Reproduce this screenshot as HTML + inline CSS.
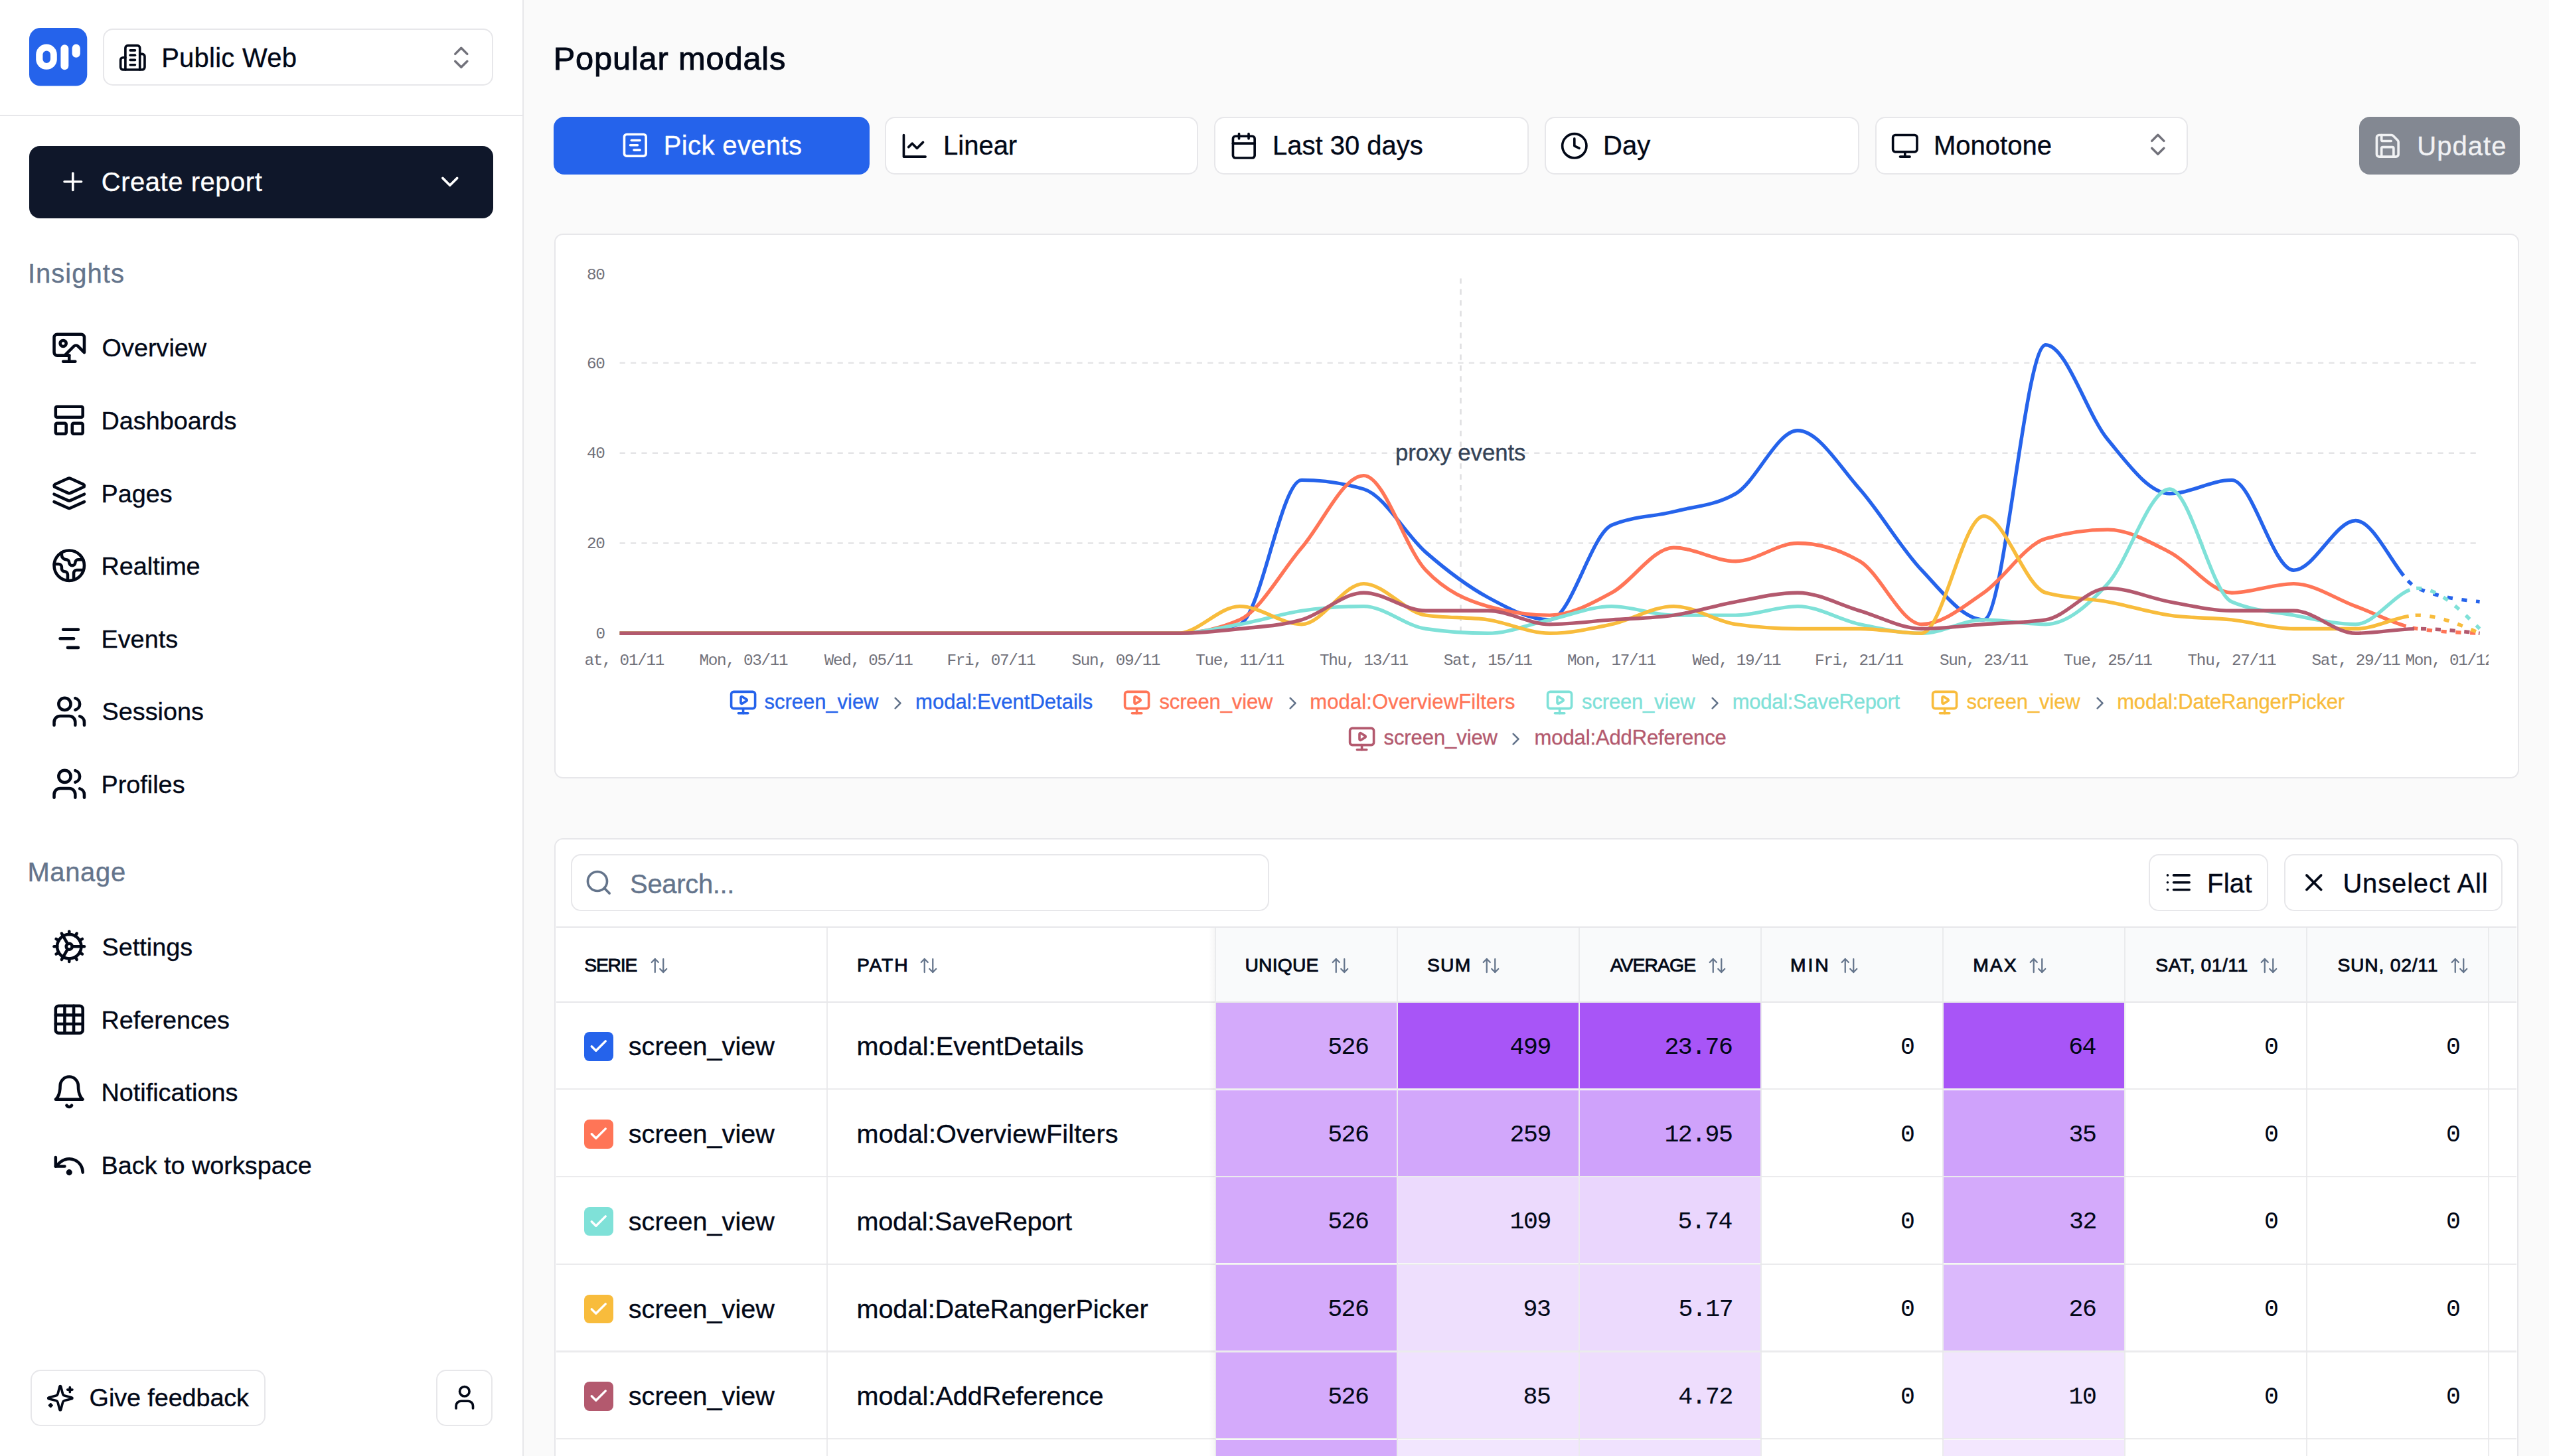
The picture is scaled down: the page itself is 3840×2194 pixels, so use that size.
<!DOCTYPE html>
<html><head><meta charset="utf-8"><style>
html,body{margin:0;padding:0}
body{width:3840px;height:2194px;overflow:hidden;position:relative;background:#fafafa;font-family:"Liberation Sans",sans-serif}
.b{position:absolute;box-sizing:border-box}
.t{position:absolute;white-space:pre;line-height:1;-webkit-text-stroke:0.35px currentColor}
svg{overflow:visible}
</style></head><body>
<div class="b" style="left:0.0px;top:0.0px;width:787.0px;height:2194.0px;background:#fff;"></div><div class="b" style="left:786.5px;top:0.0px;width:2.5px;height:2194.0px;background:#e7e7ea;"></div><div class="b" style="left:0.0px;top:172.8px;width:787.0px;height:2.5px;background:#e7e7ea;"></div><svg style="position:absolute;left:44.3px;top:42.4px" width="87.3" height="87.6" viewBox="0 0 87.3 87.6"><rect x="0" y="0" width="87.3" height="87.6" rx="17" fill="#2563eb"/><rect x="10.2" y="24.6" width="31.6" height="38.2" rx="15.8" ry="15.5" fill="#fff"/><rect x="20.4" y="34.5" width="11.6" height="18.4" rx="5.8" fill="#2563eb"/><rect x="47.4" y="25.3" width="11.9" height="37.9" rx="5.95" fill="#fff"/><rect x="64.6" y="24.6" width="12.2" height="20.1" rx="6.1" fill="#fff"/></svg><div class="b" style="left:155.0px;top:43.0px;width:587.5px;height:86.2px;background:#fff;border:2.6px solid #e7e7ea;border-radius:15px;"></div><svg style="position:absolute;left:178.2px;top:64.8px" width="43.6" height="43.6" viewBox="0 0 24 24" fill="none" stroke="#020817" stroke-width="2" stroke-linecap="round" stroke-linejoin="round"><path d="M6 22V4a2 2 0 0 1 2-2h8a2 2 0 0 1 2 2v18Z"/><path d="M6 12H4a2 2 0 0 0-2 2v6a2 2 0 0 0 2 2h2"/><path d="M18 9h2a2 2 0 0 1 2 2v9a2 2 0 0 1-2 2h-2"/><path d="M10 6h4"/><path d="M10 10h4"/><path d="M10 14h4"/><path d="M10 18h4"/></svg><div class="t" style="left:243.2px;top:66.6px;font-size:40.00px;color:#020817;letter-spacing:0.24px;">Public Web</div><svg style="position:absolute;left:673.0px;top:64.5px" width="43.6" height="43.6" viewBox="0 0 24 24" fill="none" stroke="#71717a" stroke-width="1.9" stroke-linecap="round" stroke-linejoin="round"><path d="m7 15 5 5 5-5"/><path d="m7 9 5-5 5 5"/></svg><div class="b" style="left:44.0px;top:219.5px;width:699.0px;height:109.5px;background:#0f172a;border-radius:16px;"></div><svg style="position:absolute;left:87.5px;top:252.4px" width="43.6" height="43.6" viewBox="0 0 24 24" fill="none" stroke="#fff" stroke-width="2" stroke-linecap="round" stroke-linejoin="round"><path d="M5 12h14"/><path d="M12 5v14"/></svg><div class="t" style="left:152.8px;top:254.3px;font-size:40.00px;color:#fff;letter-spacing:0.53px;">Create report</div><svg style="position:absolute;left:655.9px;top:251.8px" width="43.6" height="43.6" viewBox="0 0 24 24" fill="none" stroke="#fff" stroke-width="2" stroke-linecap="round" stroke-linejoin="round"><path d="m6 9 6 6 6-6"/></svg><div class="t" style="left:41.9px;top:392.4px;font-size:40.00px;color:#64748b;letter-spacing:1.03px;">Insights</div><svg style="position:absolute;left:77.0px;top:496.5px" width="54.5" height="54.5" viewBox="0 0 24 24" fill="none" stroke="#020817" stroke-width="2" stroke-linecap="round" stroke-linejoin="round"><circle cx="8" cy="9" r="2"/><path d="m9 17 6.1-6.1a2 2 0 0 1 2.81.01L22 15V5a2 2 0 0 0-2-2H4a2 2 0 0 0-2 2v10a2 2 0 0 0 2 2h8"/><path d="M8 21h8"/><path d="M12 17v4"/></svg><div class="t" style="left:153.6px;top:506.3px;font-size:37.80px;color:#020817;">Overview</div><svg style="position:absolute;left:77.0px;top:606.1px" width="54.5" height="54.5" viewBox="0 0 24 24" fill="none" stroke="#020817" stroke-width="2" stroke-linecap="round" stroke-linejoin="round"><rect width="18" height="7" x="3" y="3" rx="1"/><rect width="7" height="7" x="3" y="14" rx="1"/><rect width="7" height="7" x="14" y="14" rx="1"/></svg><div class="t" style="left:152.5px;top:615.9px;font-size:37.80px;color:#020817;">Dashboards</div><svg style="position:absolute;left:77.0px;top:715.7px" width="54.5" height="54.5" viewBox="0 0 24 24" fill="none" stroke="#020817" stroke-width="2" stroke-linecap="round" stroke-linejoin="round"><path d="m12.83 2.18a2 2 0 0 0-1.66 0L2.6 6.08a1 1 0 0 0 0 1.83l8.58 3.91a2 2 0 0 0 1.66 0l8.58-3.9a1 1 0 0 0 0-1.83Z"/><path d="m22 17.65-9.17 4.16a2 2 0 0 1-1.66 0L2 17.65"/><path d="m22 12.65-9.17 4.16a2 2 0 0 1-1.66 0L2 12.65"/></svg><div class="t" style="left:152.5px;top:725.5px;font-size:37.80px;color:#020817;">Pages</div><svg style="position:absolute;left:77.0px;top:825.3px" width="54.5" height="54.5" viewBox="0 0 24 24" fill="none" stroke="#020817" stroke-width="2" stroke-linecap="round" stroke-linejoin="round"><path d="M21.54 15H17a2 2 0 0 0-2 2v4.54"/><path d="M7 3.34V5a3 3 0 0 0 3 3a2 2 0 0 1 2 2c0 1.1.9 2 2 2a2 2 0 0 0 2-2c0-1.1.9-2 2-2h3.17"/><path d="M11 21.95V18a2 2 0 0 0-2-2a2 2 0 0 1-2-2v-1a2 2 0 0 0-2-2H2.05"/><circle cx="12" cy="12" r="10"/></svg><div class="t" style="left:152.5px;top:835.1px;font-size:37.80px;color:#020817;">Realtime</div><svg style="position:absolute;left:77.0px;top:934.9px" width="54.5" height="54.5" viewBox="0 0 24 24" fill="none" stroke="#020817" stroke-width="2" stroke-linecap="round" stroke-linejoin="round"><path d="M8 6h10"/><path d="M6 12h9"/><path d="M11 18h7"/></svg><div class="t" style="left:152.5px;top:944.7px;font-size:37.80px;color:#020817;">Events</div><svg style="position:absolute;left:77.0px;top:1044.5px" width="54.5" height="54.5" viewBox="0 0 24 24" fill="none" stroke="#020817" stroke-width="2" stroke-linecap="round" stroke-linejoin="round"><path d="M16 21v-2a4 4 0 0 0-4-4H6a4 4 0 0 0-4 4v2"/><circle cx="9" cy="7" r="4"/><path d="M22 21v-2a4 4 0 0 0-3-3.87"/><path d="M16 3.13a4 4 0 0 1 0 7.75"/></svg><div class="t" style="left:153.6px;top:1054.3px;font-size:37.80px;color:#020817;">Sessions</div><svg style="position:absolute;left:77.0px;top:1154.1px" width="54.5" height="54.5" viewBox="0 0 24 24" fill="none" stroke="#020817" stroke-width="2" stroke-linecap="round" stroke-linejoin="round"><path d="M16 21v-2a4 4 0 0 0-4-4H6a4 4 0 0 0-4 4v2"/><circle cx="9" cy="7" r="4"/><path d="M22 21v-2a4 4 0 0 0-3-3.87"/><path d="M16 3.13a4 4 0 0 1 0 7.75"/></svg><div class="t" style="left:152.5px;top:1163.9px;font-size:37.80px;color:#020817;">Profiles</div><div class="t" style="left:41.4px;top:1294.1px;font-size:40.00px;color:#64748b;letter-spacing:0.64px;">Manage</div><svg style="position:absolute;left:77.0px;top:1399.2px" width="54.5" height="54.5" viewBox="0 0 24 24" fill="none" stroke="#020817" stroke-width="2" stroke-linecap="round" stroke-linejoin="round"><path d="M12 20a8 8 0 1 0 0-16 8 8 0 0 0 0 16Z"/><path d="M12 14a2 2 0 1 0 0-4 2 2 0 0 0 0 4Z"/><path d="M12 2v2"/><path d="M12 22v-2"/><path d="m17 20.66-1-1.73"/><path d="M11 10.27 7 3.34"/><path d="m20.66 17-1.73-1"/><path d="m3.34 7 1.73 1"/><path d="M14 12h8"/><path d="M2 12h2"/><path d="m20.66 7-1.73 1"/><path d="m3.34 17 1.73-1"/><path d="m17 3.34-1 1.73"/><path d="m11 13.73-4 6.93"/></svg><div class="t" style="left:153.6px;top:1409.0px;font-size:37.80px;color:#020817;">Settings</div><svg style="position:absolute;left:77.0px;top:1508.8px" width="54.5" height="54.5" viewBox="0 0 24 24" fill="none" stroke="#020817" stroke-width="2" stroke-linecap="round" stroke-linejoin="round"><rect width="18" height="18" x="3" y="3" rx="2"/><path d="M3 9h18"/><path d="M3 15h18"/><path d="M9 3v18"/><path d="M15 3v18"/></svg><div class="t" style="left:152.5px;top:1518.6px;font-size:37.80px;color:#020817;">References</div><svg style="position:absolute;left:77.0px;top:1618.4px" width="54.5" height="54.5" viewBox="0 0 24 24" fill="none" stroke="#020817" stroke-width="2" stroke-linecap="round" stroke-linejoin="round"><path d="M6 8a6 6 0 0 1 12 0c0 7 3 9 3 9H3s3-2 3-9"/><path d="M10.3 21a1.94 1.94 0 0 0 3.4 0"/></svg><div class="t" style="left:152.5px;top:1628.2px;font-size:37.80px;color:#020817;">Notifications</div><svg style="position:absolute;left:77.0px;top:1728.0px" width="54.5" height="54.5" viewBox="0 0 24 24" fill="none" stroke="#020817" stroke-width="2" stroke-linecap="round" stroke-linejoin="round"><path d="M21 17a9 9 0 0 0-15-6.7L3 13"/><path d="M3 7v6h6"/><circle cx="12" cy="17" r="1"/></svg><div class="t" style="left:152.5px;top:1737.8px;font-size:37.80px;color:#020817;">Back to workspace</div><div class="b" style="left:45.5px;top:2064.0px;width:354.5px;height:85.0px;background:#fff;border:2.6px solid #e7e7ea;border-radius:15px;"></div><svg style="position:absolute;left:68.5px;top:2084.8px" width="43.6" height="43.6" viewBox="0 0 24 24" fill="none" stroke="#020817" stroke-width="2" stroke-linecap="round" stroke-linejoin="round"><path d="M9.937 15.5A2 2 0 0 0 8.5 14.063l-6.135-1.582a.5.5 0 0 1 0-.962L8.5 9.936A2 2 0 0 0 9.937 8.5l1.582-6.135a.5.5 0 0 1 .963 0L14.063 8.5A2 2 0 0 0 15.5 9.937l6.135 1.581a.5.5 0 0 1 0 .964L15.5 14.063a2 2 0 0 0-1.437 1.437l-1.582 6.135a.5.5 0 0 1-.963 0z"/><path d="M20 3v4"/><path d="M22 5h-4"/><path d="M4 17v2"/><path d="M5 18H3"/></svg><div class="t" style="left:134.6px;top:2088.0px;font-size:37.80px;color:#020817;letter-spacing:-0.10px;">Give feedback</div><div class="b" style="left:657.0px;top:2064.0px;width:84.5px;height:85.0px;background:#fff;border:2.6px solid #e7e7ea;border-radius:15px;"></div><svg style="position:absolute;left:677.6px;top:2084.4px" width="43.6" height="43.6" viewBox="0 0 24 24" fill="none" stroke="#020817" stroke-width="2" stroke-linecap="round" stroke-linejoin="round"><path d="M19 21v-2a4 4 0 0 0-4-4H9a4 4 0 0 0-4 4v2"/><circle cx="12" cy="7" r="4"/></svg><div class="t" style="left:833.7px;top:64.0px;font-size:48.80px;color:#020817;letter-spacing:0.82px;-webkit-text-stroke:0.9px currentColor">Popular modals</div><div class="b" style="left:834.0px;top:175.5px;width:476.0px;height:87.3px;background:#2563eb;border-radius:16px;"></div><svg style="position:absolute;left:935.3px;top:197.4px" width="43.6" height="43.6" viewBox="0 0 24 24" fill="none" stroke="#fff" stroke-width="2" stroke-linecap="round" stroke-linejoin="round"><rect width="18" height="18" x="3" y="3" rx="2"/><path d="M9 8h7"/><path d="M8 12h6"/><path d="M11 16h5"/></svg><div class="t" style="left:999.8px;top:199.4px;font-size:40.00px;color:#fff;letter-spacing:0.37px;">Pick events</div><div class="b" style="left:1333.0px;top:175.5px;width:472.0px;height:87.3px;background:#fff;border:2.6px solid #e7e7ea;border-radius:15px;"></div><svg style="position:absolute;left:1356.4px;top:197.7px" width="43.6" height="43.6" viewBox="0 0 24 24" fill="none" stroke="#020817" stroke-width="2" stroke-linecap="round" stroke-linejoin="round"><path d="M3 3v18h18"/><path d="m19 9-5 5-4-4-3 3"/></svg><div class="t" style="left:1421.0px;top:199.4px;font-size:40.00px;color:#020817;">Linear</div><div class="b" style="left:1829.0px;top:175.5px;width:474.0px;height:87.3px;background:#fff;border:2.6px solid #e7e7ea;border-radius:15px;"></div><svg style="position:absolute;left:1852.4px;top:197.7px" width="43.6" height="43.6" viewBox="0 0 24 24" fill="none" stroke="#020817" stroke-width="2" stroke-linecap="round" stroke-linejoin="round"><path d="M8 2v4"/><path d="M16 2v4"/><rect width="18" height="18" x="3" y="4" rx="2"/><path d="M3 10h18"/></svg><div class="t" style="left:1917.0px;top:199.4px;font-size:40.00px;color:#020817;">Last 30 days</div><div class="b" style="left:2327.0px;top:175.5px;width:473.5px;height:87.3px;background:#fff;border:2.6px solid #e7e7ea;border-radius:15px;"></div><svg style="position:absolute;left:2350.4px;top:197.7px" width="43.6" height="43.6" viewBox="0 0 24 24" fill="none" stroke="#020817" stroke-width="2" stroke-linecap="round" stroke-linejoin="round"><circle cx="12" cy="12" r="10"/><polyline points="12 6 12 12 16 14"/></svg><div class="t" style="left:2415.0px;top:199.4px;font-size:40.00px;color:#020817;">Day</div><div class="b" style="left:2825.0px;top:175.5px;width:471.0px;height:87.3px;background:#fff;border:2.6px solid #e7e7ea;border-radius:15px;"></div><svg style="position:absolute;left:2848.4px;top:197.7px" width="43.6" height="43.6" viewBox="0 0 24 24" fill="none" stroke="#020817" stroke-width="2" stroke-linecap="round" stroke-linejoin="round"><rect width="20" height="14" x="2" y="3" rx="2"/><line x1="8" x2="16" y1="21" y2="21"/><line x1="12" x2="12" y1="17" y2="21"/></svg><div class="t" style="left:2913.0px;top:199.4px;font-size:40.00px;color:#020817;">Monotone</div><svg style="position:absolute;left:3229.3px;top:195.9px" width="43.6" height="43.6" viewBox="0 0 24 24" fill="none" stroke="#71717a" stroke-width="1.9" stroke-linecap="round" stroke-linejoin="round"><path d="m7 15 5 5 5-5"/><path d="m7 9 5-5 5 5"/></svg><div class="b" style="left:3553.5px;top:175.5px;width:242.0px;height:87.3px;background:#838892;border-radius:16px;"></div><svg style="position:absolute;left:3575.4px;top:197.8px" width="43.6" height="43.6" viewBox="0 0 24 24" fill="none" stroke="#f1f2f4" stroke-width="2" stroke-linecap="round" stroke-linejoin="round"><path d="M15.2 3a2 2 0 0 1 1.4.6l3.8 3.8a2 2 0 0 1 .6 1.4V19a2 2 0 0 1-2 2H5a2 2 0 0 1-2-2V5a2 2 0 0 1 2-2z"/><path d="M17 21v-7a1 1 0 0 0-1-1H8a1 1 0 0 0-1 1v7"/><path d="M7 3v4a1 1 0 0 0 1 1h7"/></svg><div class="t" style="left:3641.2px;top:199.7px;font-size:40.00px;color:#f1f2f4;letter-spacing:1.06px;">Update</div><div class="b" style="left:835.0px;top:352.0px;width:2960.0px;height:821.0px;background:#fff;border:2.6px solid #e7e7ea;border-radius:13px;"></div><svg style="position:absolute;left:0;top:0" width="3840" height="1200" viewBox="0 0 3840 1200"><defs><clipPath id="pc"><rect x="880" y="330" width="2869" height="800"/></clipPath></defs><line x1="933.6" x2="3735.6" y1="818.5" y2="818.5" stroke="#e4e4e6" stroke-width="2.4" stroke-dasharray="8.2 8.2"/><line x1="933.6" x2="3735.6" y1="682.7" y2="682.7" stroke="#e4e4e6" stroke-width="2.4" stroke-dasharray="8.2 8.2"/><line x1="933.6" x2="3735.6" y1="546.9" y2="546.9" stroke="#e4e4e6" stroke-width="2.4" stroke-dasharray="8.2 8.2"/><line x1="2200.5" x2="2200.5" y1="419.4" y2="954" stroke="#e0e0e2" stroke-width="2.7" stroke-dasharray="8.2 8.2"/><path d="M933.6,954.3 C964.7,954.3 995.9,954.3 1027.0,954.3 C1058.1,954.3 1089.3,954.3 1120.4,954.3 C1151.5,954.3 1182.7,954.3 1213.8,954.3 C1244.9,954.3 1276.1,954.3 1307.2,954.3 C1338.3,954.3 1369.5,954.3 1400.6,954.3 C1431.7,954.3 1462.9,954.3 1494.0,954.3 C1525.1,954.3 1556.3,954.3 1587.4,954.3 C1618.5,954.3 1649.7,954.3 1680.8,954.3 C1711.9,954.3 1743.1,954.3 1774.2,954.3 C1805.3,954.3 1836.5,949.8 1867.6,940.7 C1898.7,931.7 1929.9,723.4 1961.0,723.4 C1992.1,723.4 2023.3,728.0 2054.4,737.0 C2085.5,746.1 2116.7,804.9 2147.8,832.1 C2178.9,859.2 2210.1,883.0 2241.2,900.0 C2272.3,917.0 2303.5,933.9 2334.6,933.9 C2365.7,933.9 2396.9,804.9 2428.0,791.3 C2459.1,777.8 2490.3,778.9 2521.4,771.0 C2552.5,763.0 2583.7,761.9 2614.8,743.8 C2645.9,725.7 2677.1,648.8 2708.2,648.8 C2739.3,648.8 2770.5,701.9 2801.6,737.0 C2832.7,772.1 2863.9,826.4 2895.0,859.2 C2926.1,892.1 2957.3,933.9 2988.4,933.9 C3019.5,933.9 3050.7,519.7 3081.8,519.7 C3112.9,519.7 3144.1,625.0 3175.2,662.3 C3206.3,699.7 3237.5,743.8 3268.6,743.8 C3299.7,743.8 3330.9,723.4 3362.0,723.4 C3393.1,723.4 3424.3,859.2 3455.4,859.2 C3486.5,859.2 3517.7,784.5 3548.8,784.5 C3572.9,784.5 3596.9,837.3 3621.0,867.5" fill="none" stroke="#2563eb" stroke-width="5.4" stroke-linejoin="round"/><path d="M3621.0,867.5 C3628.1,876.4 3635.1,883.3 3642.2,886.4 C3673.3,900.0 3704.5,903.4 3735.6,906.8" fill="none" stroke="#2563eb" stroke-width="5.4" stroke-dasharray="8.2 13.6" stroke-dashoffset="11.8"/><path d="M933.6,954.3 C964.7,954.3 995.9,954.3 1027.0,954.3 C1058.1,954.3 1089.3,954.3 1120.4,954.3 C1151.5,954.3 1182.7,954.3 1213.8,954.3 C1244.9,954.3 1276.1,954.3 1307.2,954.3 C1338.3,954.3 1369.5,954.3 1400.6,954.3 C1431.7,954.3 1462.9,954.3 1494.0,954.3 C1525.1,954.3 1556.3,954.3 1587.4,954.3 C1618.5,954.3 1649.7,954.3 1680.8,954.3 C1711.9,954.3 1743.1,954.3 1774.2,954.3 C1805.3,954.3 1836.5,947.5 1867.6,933.9 C1898.7,920.3 1929.9,861.5 1961.0,825.3 C1992.1,789.1 2023.3,716.6 2054.4,716.6 C2085.5,716.6 2116.7,826.4 2147.8,859.2 C2178.9,892.1 2210.1,904.5 2241.2,913.6 C2272.3,922.6 2303.5,927.1 2334.6,927.1 C2365.7,927.1 2396.9,910.2 2428.0,893.2 C2459.1,876.2 2490.3,825.3 2521.4,825.3 C2552.5,825.3 2583.7,845.7 2614.8,845.7 C2645.9,845.7 2677.1,818.5 2708.2,818.5 C2739.3,818.5 2770.5,827.6 2801.6,845.7 C2832.7,863.8 2863.9,940.7 2895.0,940.7 C2926.1,940.7 2957.3,914.7 2988.4,893.2 C3019.5,871.7 3050.7,820.8 3081.8,811.7 C3112.9,802.7 3144.1,798.1 3175.2,798.1 C3206.3,798.1 3237.5,816.2 3268.6,832.1 C3299.7,847.9 3330.9,893.2 3362.0,893.2 C3393.1,893.2 3424.3,879.6 3455.4,879.6 C3486.5,879.6 3517.7,902.2 3548.8,913.6 C3574.1,922.7 3599.3,936.4 3624.6,943.6" fill="none" stroke="#ff7557" stroke-width="5.4" stroke-linejoin="round"/><path d="M3624.6,943.6 C3630.5,945.3 3636.3,946.7 3642.2,947.5 C3673.3,952.0 3704.5,953.2 3735.6,954.3" fill="none" stroke="#ff7557" stroke-width="5.4" stroke-dasharray="8.2 13.6" stroke-dashoffset="11.8"/><path d="M933.6,954.3 C964.7,954.3 995.9,954.3 1027.0,954.3 C1058.1,954.3 1089.3,954.3 1120.4,954.3 C1151.5,954.3 1182.7,954.3 1213.8,954.3 C1244.9,954.3 1276.1,954.3 1307.2,954.3 C1338.3,954.3 1369.5,954.3 1400.6,954.3 C1431.7,954.3 1462.9,954.3 1494.0,954.3 C1525.1,954.3 1556.3,954.3 1587.4,954.3 C1618.5,954.3 1649.7,954.3 1680.8,954.3 C1711.9,954.3 1743.1,954.3 1774.2,954.3 C1805.3,954.3 1836.5,946.4 1867.6,940.7 C1898.7,935.1 1929.9,924.9 1961.0,920.3 C1992.1,915.8 2023.3,913.6 2054.4,913.6 C2085.5,913.6 2116.7,943.0 2147.8,947.5 C2178.9,952.0 2210.1,954.3 2241.2,954.3 C2272.3,954.3 2303.5,940.7 2334.6,933.9 C2365.7,927.1 2396.9,913.6 2428.0,913.6 C2459.1,913.6 2490.3,927.1 2521.4,927.1 C2552.5,927.1 2583.7,927.1 2614.8,927.1 C2645.9,927.1 2677.1,913.6 2708.2,913.6 C2739.3,913.6 2770.5,933.9 2801.6,940.7 C2832.7,947.5 2863.9,954.3 2895.0,954.3 C2926.1,954.3 2957.3,933.9 2988.4,933.9 C3019.5,933.9 3050.7,940.7 3081.8,940.7 C3112.9,940.7 3144.1,913.6 3175.2,879.6 C3206.3,845.7 3237.5,737.0 3268.6,737.0 C3299.7,737.0 3330.9,893.2 3362.0,906.8 C3393.1,920.4 3424.3,921.5 3455.4,927.1 C3486.5,932.8 3517.7,940.7 3548.8,940.7 C3576.0,940.7 3603.2,899.3 3630.4,888.8" fill="none" stroke="#7fe1d8" stroke-width="5.4" stroke-linejoin="round"/><path d="M3630.4,888.8 C3634.3,887.3 3638.3,886.4 3642.2,886.4 C3673.3,886.4 3704.5,917.0 3735.6,947.5" fill="none" stroke="#7fe1d8" stroke-width="5.4" stroke-dasharray="8.2 13.6" stroke-dashoffset="11.8"/><path d="M933.6,954.3 C964.7,954.3 995.9,954.3 1027.0,954.3 C1058.1,954.3 1089.3,954.3 1120.4,954.3 C1151.5,954.3 1182.7,954.3 1213.8,954.3 C1244.9,954.3 1276.1,954.3 1307.2,954.3 C1338.3,954.3 1369.5,954.3 1400.6,954.3 C1431.7,954.3 1462.9,954.3 1494.0,954.3 C1525.1,954.3 1556.3,954.3 1587.4,954.3 C1618.5,954.3 1649.7,954.3 1680.8,954.3 C1711.9,954.3 1743.1,954.3 1774.2,954.3 C1805.3,954.3 1836.5,913.6 1867.6,913.6 C1898.7,913.6 1929.9,940.7 1961.0,940.7 C1992.1,940.7 2023.3,879.6 2054.4,879.6 C2085.5,879.6 2116.7,922.6 2147.8,927.1 C2178.9,931.7 2210.1,929.4 2241.2,933.9 C2272.3,938.5 2303.5,954.3 2334.6,954.3 C2365.7,954.3 2396.9,947.5 2428.0,940.7 C2459.1,933.9 2490.3,913.6 2521.4,913.6 C2552.5,913.6 2583.7,936.2 2614.8,940.7 C2645.9,945.2 2677.1,947.5 2708.2,947.5 C2739.3,947.5 2770.5,947.5 2801.6,947.5 C2832.7,947.5 2863.9,954.3 2895.0,954.3 C2926.1,954.3 2957.3,777.8 2988.4,777.8 C3019.5,777.8 3050.7,884.1 3081.8,893.2 C3112.9,902.2 3144.1,901.1 3175.2,906.8 C3206.3,912.4 3237.5,922.6 3268.6,927.1 C3299.7,931.7 3330.9,930.5 3362.0,933.9 C3393.1,937.3 3424.3,947.5 3455.4,947.5 C3486.5,947.5 3517.7,947.5 3548.8,947.5 C3575.4,947.5 3602.1,932.6 3628.7,928.3" fill="none" stroke="#f8bc3c" stroke-width="5.4" stroke-linejoin="round"/><path d="M3628.7,928.3 C3633.2,927.6 3637.7,927.1 3642.2,927.1 C3673.3,927.1 3704.5,940.7 3735.6,954.3" fill="none" stroke="#f8bc3c" stroke-width="5.4" stroke-dasharray="8.2 13.6" stroke-dashoffset="11.8"/><path d="M933.6,954.3 C964.7,954.3 995.9,954.3 1027.0,954.3 C1058.1,954.3 1089.3,954.3 1120.4,954.3 C1151.5,954.3 1182.7,954.3 1213.8,954.3 C1244.9,954.3 1276.1,954.3 1307.2,954.3 C1338.3,954.3 1369.5,954.3 1400.6,954.3 C1431.7,954.3 1462.9,954.3 1494.0,954.3 C1525.1,954.3 1556.3,954.3 1587.4,954.3 C1618.5,954.3 1649.7,954.3 1680.8,954.3 C1711.9,954.3 1743.1,954.3 1774.2,954.3 C1805.3,954.3 1836.5,950.9 1867.6,947.5 C1898.7,944.1 1929.9,943.0 1961.0,933.9 C1992.1,924.9 2023.3,893.2 2054.4,893.2 C2085.5,893.2 2116.7,920.3 2147.8,920.3 C2178.9,920.3 2210.1,920.3 2241.2,920.3 C2272.3,920.3 2303.5,940.7 2334.6,940.7 C2365.7,940.7 2396.9,936.2 2428.0,933.9 C2459.1,931.7 2490.3,931.7 2521.4,927.1 C2552.5,922.6 2583.7,912.4 2614.8,906.8 C2645.9,901.1 2677.1,893.2 2708.2,893.2 C2739.3,893.2 2770.5,911.3 2801.6,920.3 C2832.7,929.4 2863.9,947.5 2895.0,947.5 C2926.1,947.5 2957.3,943.0 2988.4,940.7 C3019.5,938.5 3050.7,938.5 3081.8,933.9 C3112.9,929.4 3144.1,886.4 3175.2,886.4 C3206.3,886.4 3237.5,901.1 3268.6,906.8 C3299.7,912.4 3330.9,920.3 3362.0,920.3 C3393.1,920.3 3424.3,920.3 3455.4,920.3 C3486.5,920.3 3517.7,954.3 3548.8,954.3 C3578.2,954.3 3607.6,948.2 3637.0,947.6" fill="none" stroke="#b3596e" stroke-width="5.4" stroke-linejoin="round"/><path d="M3637.0,947.6 C3638.7,947.5 3640.5,947.5 3642.2,947.5 C3673.3,947.5 3704.5,950.9 3735.6,954.3" fill="none" stroke="#b3596e" stroke-width="5.4" stroke-dasharray="8.2 13.6" stroke-dashoffset="11.8"/></svg><div class="t" style="left:897.4px;top:943.9px;font-size:24.30px;color:#71717a;font-family:'Liberation Mono';letter-spacing:-1.30px;-webkit-text-stroke:0">0</div><div class="t" style="left:884.1px;top:808.1px;font-size:24.30px;color:#71717a;font-family:'Liberation Mono';letter-spacing:-1.30px;-webkit-text-stroke:0">20</div><div class="t" style="left:884.1px;top:672.3px;font-size:24.30px;color:#71717a;font-family:'Liberation Mono';letter-spacing:-1.30px;-webkit-text-stroke:0">40</div><div class="t" style="left:884.1px;top:536.5px;font-size:24.30px;color:#71717a;font-family:'Liberation Mono';letter-spacing:-1.30px;-webkit-text-stroke:0">60</div><div class="t" style="left:884.1px;top:403.4px;font-size:24.30px;color:#71717a;font-family:'Liberation Mono';letter-spacing:-1.30px;-webkit-text-stroke:0">80</div><div class="b" style="left:882px;top:960px;width:2867px;height:60px;overflow:hidden"><div class="t" style="left:-14.8px;top:24.4px;font-size:24.30px;color:#71717a;font-family:'Liberation Mono';letter-spacing:-1.30px;-webkit-text-stroke:0">Sat, 01/11</div><div class="t" style="left:171.5px;top:24.4px;font-size:24.30px;color:#71717a;font-family:'Liberation Mono';letter-spacing:-1.30px;-webkit-text-stroke:0">Mon, 03/11</div><div class="t" style="left:359.8px;top:24.4px;font-size:24.30px;color:#71717a;font-family:'Liberation Mono';letter-spacing:-1.30px;-webkit-text-stroke:0">Wed, 05/11</div><div class="t" style="left:544.4px;top:24.4px;font-size:24.30px;color:#71717a;font-family:'Liberation Mono';letter-spacing:-1.30px;-webkit-text-stroke:0">Fri, 07/11</div><div class="t" style="left:732.4px;top:24.4px;font-size:24.30px;color:#71717a;font-family:'Liberation Mono';letter-spacing:-1.30px;-webkit-text-stroke:0">Sun, 09/11</div><div class="t" style="left:919.2px;top:24.4px;font-size:24.30px;color:#71717a;font-family:'Liberation Mono';letter-spacing:-1.30px;-webkit-text-stroke:0">Tue, 11/11</div><div class="t" style="left:1106.0px;top:24.4px;font-size:24.30px;color:#71717a;font-family:'Liberation Mono';letter-spacing:-1.30px;-webkit-text-stroke:0">Thu, 13/11</div><div class="t" style="left:1292.8px;top:24.4px;font-size:24.30px;color:#71717a;font-family:'Liberation Mono';letter-spacing:-1.30px;-webkit-text-stroke:0">Sat, 15/11</div><div class="t" style="left:1479.1px;top:24.4px;font-size:24.30px;color:#71717a;font-family:'Liberation Mono';letter-spacing:-1.30px;-webkit-text-stroke:0">Mon, 17/11</div><div class="t" style="left:1667.4px;top:24.4px;font-size:24.30px;color:#71717a;font-family:'Liberation Mono';letter-spacing:-1.30px;-webkit-text-stroke:0">Wed, 19/11</div><div class="t" style="left:1852.0px;top:24.4px;font-size:24.30px;color:#71717a;font-family:'Liberation Mono';letter-spacing:-1.30px;-webkit-text-stroke:0">Fri, 21/11</div><div class="t" style="left:2040.0px;top:24.4px;font-size:24.30px;color:#71717a;font-family:'Liberation Mono';letter-spacing:-1.30px;-webkit-text-stroke:0">Sun, 23/11</div><div class="t" style="left:2226.8px;top:24.4px;font-size:24.30px;color:#71717a;font-family:'Liberation Mono';letter-spacing:-1.30px;-webkit-text-stroke:0">Tue, 25/11</div><div class="t" style="left:2413.6px;top:24.4px;font-size:24.30px;color:#71717a;font-family:'Liberation Mono';letter-spacing:-1.30px;-webkit-text-stroke:0">Thu, 27/11</div><div class="t" style="left:2600.4px;top:24.4px;font-size:24.30px;color:#71717a;font-family:'Liberation Mono';letter-spacing:-1.30px;-webkit-text-stroke:0">Sat, 29/11</div><div class="t" style="left:2741.5px;top:24.4px;font-size:24.30px;color:#71717a;font-family:'Liberation Mono';letter-spacing:-1.30px;-webkit-text-stroke:0">Mon, 01/12</div></div><div class="t" style="left:2101.9px;top:664.7px;font-size:34.70px;color:#334155;letter-spacing:-0.01px;">proxy events</div><svg style="position:absolute;left:1097.5px;top:1037.0px" width="43.2" height="43.2" viewBox="0 0 24 24" fill="none" stroke="#2563eb" stroke-width="2" stroke-linecap="round" stroke-linejoin="round"><path d="M10 7.75a.75.75 0 0 1 1.142-.638l3.664 2.249a.75.75 0 0 1 0 1.278l-3.664 2.25a.75.75 0 0 1-1.142-.64z"/><path d="M12 17v4"/><path d="M8 21h8"/><rect x="2" y="3" width="20" height="14" rx="2"/></svg><div class="t" style="left:1151.6px;top:1041.5px;font-size:31.00px;color:#2563eb;letter-spacing:-0.04px;">screen_view</div><svg style="position:absolute;left:1336.8px;top:1043.5px" width="31.2" height="31.2" viewBox="0 0 24 24" fill="none" stroke="#64748b" stroke-width="2" stroke-linecap="round" stroke-linejoin="round"><path d="m9 18 6-6-6-6"/></svg><div class="t" style="left:1379.1px;top:1041.5px;font-size:31.00px;color:#2563eb;">modal:EventDetails</div><svg style="position:absolute;left:1691.2px;top:1037.0px" width="43.2" height="43.2" viewBox="0 0 24 24" fill="none" stroke="#ff7557" stroke-width="2" stroke-linecap="round" stroke-linejoin="round"><path d="M10 7.75a.75.75 0 0 1 1.142-.638l3.664 2.249a.75.75 0 0 1 0 1.278l-3.664 2.25a.75.75 0 0 1-1.142-.64z"/><path d="M12 17v4"/><path d="M8 21h8"/><rect x="2" y="3" width="20" height="14" rx="2"/></svg><div class="t" style="left:1746.4px;top:1041.5px;font-size:31.00px;color:#ff7557;letter-spacing:-0.13px;">screen_view</div><svg style="position:absolute;left:1932.1px;top:1043.5px" width="31.2" height="31.2" viewBox="0 0 24 24" fill="none" stroke="#64748b" stroke-width="2" stroke-linecap="round" stroke-linejoin="round"><path d="m9 18 6-6-6-6"/></svg><div class="t" style="left:1973.2px;top:1041.5px;font-size:31.00px;color:#ff7557;letter-spacing:0.13px;">modal:OverviewFilters</div><svg style="position:absolute;left:2328.2px;top:1037.0px" width="43.2" height="43.2" viewBox="0 0 24 24" fill="none" stroke="#7fe1d8" stroke-width="2" stroke-linecap="round" stroke-linejoin="round"><path d="M10 7.75a.75.75 0 0 1 1.142-.638l3.664 2.249a.75.75 0 0 1 0 1.278l-3.664 2.25a.75.75 0 0 1-1.142-.64z"/><path d="M12 17v4"/><path d="M8 21h8"/><rect x="2" y="3" width="20" height="14" rx="2"/></svg><div class="t" style="left:2383.1px;top:1041.5px;font-size:31.00px;color:#7fe1d8;letter-spacing:-0.18px;">screen_view</div><svg style="position:absolute;left:2567.6px;top:1043.5px" width="31.2" height="31.2" viewBox="0 0 24 24" fill="none" stroke="#64748b" stroke-width="2" stroke-linecap="round" stroke-linejoin="round"><path d="m9 18 6-6-6-6"/></svg><div class="t" style="left:2609.8px;top:1041.5px;font-size:31.00px;color:#7fe1d8;letter-spacing:-0.29px;">modal:SaveReport</div><svg style="position:absolute;left:2908.1px;top:1037.0px" width="43.2" height="43.2" viewBox="0 0 24 24" fill="none" stroke="#f8bc3c" stroke-width="2" stroke-linecap="round" stroke-linejoin="round"><path d="M10 7.75a.75.75 0 0 1 1.142-.638l3.664 2.249a.75.75 0 0 1 0 1.278l-3.664 2.25a.75.75 0 0 1-1.142-.64z"/><path d="M12 17v4"/><path d="M8 21h8"/><rect x="2" y="3" width="20" height="14" rx="2"/></svg><div class="t" style="left:2962.6px;top:1041.5px;font-size:31.00px;color:#f8bc3c;letter-spacing:-0.12px;">screen_view</div><svg style="position:absolute;left:3147.6px;top:1043.5px" width="31.2" height="31.2" viewBox="0 0 24 24" fill="none" stroke="#64748b" stroke-width="2" stroke-linecap="round" stroke-linejoin="round"><path d="m9 18 6-6-6-6"/></svg><div class="t" style="left:3189.2px;top:1041.5px;font-size:31.00px;color:#f8bc3c;letter-spacing:-0.16px;">modal:DateRangerPicker</div><svg style="position:absolute;left:2030.2px;top:1092.4px" width="43.2" height="43.2" viewBox="0 0 24 24" fill="none" stroke="#b3596e" stroke-width="2" stroke-linecap="round" stroke-linejoin="round"><path d="M10 7.75a.75.75 0 0 1 1.142-.638l3.664 2.249a.75.75 0 0 1 0 1.278l-3.664 2.25a.75.75 0 0 1-1.142-.64z"/><path d="M12 17v4"/><path d="M8 21h8"/><rect x="2" y="3" width="20" height="14" rx="2"/></svg><div class="t" style="left:2084.5px;top:1095.8px;font-size:31.00px;color:#b3596e;letter-spacing:-0.08px;">screen_view</div><svg style="position:absolute;left:2268.3px;top:1097.8px" width="31.2" height="31.2" viewBox="0 0 24 24" fill="none" stroke="#64748b" stroke-width="2" stroke-linecap="round" stroke-linejoin="round"><path d="m9 18 6-6-6-6"/></svg><div class="t" style="left:2311.6px;top:1095.8px;font-size:31.00px;color:#b3596e;letter-spacing:-0.12px;">modal:AddReference</div><div class="b" style="left:835.0px;top:1262.5px;width:2959.0px;height:997.5px;background:#fff;border:2.6px solid #e7e7ea;border-radius:13px;"></div><div class="b" style="left:859.6px;top:1286.5px;width:1052.1px;height:86.9px;background:#fff;border:2.6px solid #e7e7ea;border-radius:15px;"></div><svg style="position:absolute;left:880.2px;top:1308.2px" width="43.6" height="43.6" viewBox="0 0 24 24" fill="none" stroke="#64748b" stroke-width="2" stroke-linecap="round" stroke-linejoin="round"><circle cx="11" cy="11" r="8"/><path d="m21 21-4.3-4.3"/></svg><div class="t" style="left:949.1px;top:1311.5px;font-size:40.00px;color:#64748b;letter-spacing:-0.34px;">Search...</div><div class="b" style="left:3236.5px;top:1287.4px;width:180.0px;height:85.2px;background:#fff;border:2.6px solid #e7e7ea;border-radius:15px;"></div><svg style="position:absolute;left:3259.7px;top:1308.3px" width="43.6" height="43.6" viewBox="0 0 24 24" fill="none" stroke="#020817" stroke-width="2" stroke-linecap="round" stroke-linejoin="round"><line x1="8" x2="21" y1="6" y2="6"/><line x1="8" x2="21" y1="12" y2="12"/><line x1="8" x2="21" y1="18" y2="18"/><line x1="3" x2="3.01" y1="6" y2="6"/><line x1="3" x2="3.01" y1="12" y2="12"/><line x1="3" x2="3.01" y1="18" y2="18"/></svg><div class="t" style="left:3325.0px;top:1310.7px;font-size:40.00px;color:#020817;letter-spacing:0.27px;">Flat</div><div class="b" style="left:3440.9px;top:1287.4px;width:329.3px;height:85.2px;background:#fff;border:2.6px solid #e7e7ea;border-radius:15px;"></div><svg style="position:absolute;left:3463.9px;top:1308.3px" width="43.6" height="43.6" viewBox="0 0 24 24" fill="none" stroke="#020817" stroke-width="2" stroke-linecap="round" stroke-linejoin="round"><path d="M18 6 6 18"/><path d="m6 6 12 12"/></svg><div class="t" style="left:3529.4px;top:1310.7px;font-size:40.00px;color:#020817;letter-spacing:0.84px;">Unselect All</div><div class="b" style="left:837.6px;top:1396.0px;width:2953.8px;height:2.4px;background:#e7e7ea;"></div><div class="b" style="left:1831.0px;top:1398.4px;width:1960.4px;height:110.6px;background:#f9fafb;"></div><div class="b" style="left:837.6px;top:1508.6px;width:2953.8px;height:2.4px;background:#e7e7ea;"></div><div class="b" style="left:1832.2px;top:1510.9px;width:271.6px;height:129.1px;background:rgb(212,170,251);"></div><div class="b" style="left:2106.2px;top:1510.9px;width:271.6px;height:129.1px;background:rgb(168,85,247);"></div><div class="b" style="left:2380.2px;top:1510.9px;width:271.6px;height:129.1px;background:rgb(168,85,247);"></div><div class="b" style="left:2928.2px;top:1510.9px;width:271.6px;height:129.1px;background:rgb(168,85,247);"></div><div class="b" style="left:1832.2px;top:1642.7px;width:271.6px;height:129.1px;background:rgb(212,170,251);"></div><div class="b" style="left:2106.2px;top:1642.7px;width:271.6px;height:129.1px;background:rgb(210,167,251);"></div><div class="b" style="left:2380.2px;top:1642.7px;width:271.6px;height:129.1px;background:rgb(207,162,251);"></div><div class="b" style="left:2928.2px;top:1642.7px;width:271.6px;height:129.1px;background:rgb(207,162,251);"></div><div class="b" style="left:1832.2px;top:1774.4px;width:271.6px;height:129.1px;background:rgb(212,170,251);"></div><div class="b" style="left:2106.2px;top:1774.4px;width:271.6px;height:129.1px;background:rgb(236,218,253);"></div><div class="b" style="left:2380.2px;top:1774.4px;width:271.6px;height:129.1px;background:rgb(234,214,253);"></div><div class="b" style="left:2928.2px;top:1774.4px;width:271.6px;height:129.1px;background:rgb(212,170,251);"></div><div class="b" style="left:1832.2px;top:1906.2px;width:271.6px;height:129.1px;background:rgb(212,170,251);"></div><div class="b" style="left:2106.2px;top:1906.2px;width:271.6px;height:129.1px;background:rgb(238,223,253);"></div><div class="b" style="left:2380.2px;top:1906.2px;width:271.6px;height:129.1px;background:rgb(236,218,253);"></div><div class="b" style="left:2928.2px;top:1906.2px;width:271.6px;height:129.1px;background:rgb(219,185,252);"></div><div class="b" style="left:1832.2px;top:2037.9px;width:271.6px;height:129.2px;background:rgb(212,170,251);"></div><div class="b" style="left:2106.2px;top:2037.9px;width:271.6px;height:129.2px;background:rgb(240,226,254);"></div><div class="b" style="left:2380.2px;top:2037.9px;width:271.6px;height:129.2px;background:rgb(238,221,253);"></div><div class="b" style="left:2928.2px;top:2037.9px;width:271.6px;height:129.2px;background:rgb(241,228,254);"></div><div class="b" style="left:1832.2px;top:2169.7px;width:271.6px;height:129.2px;background:rgb(212,170,251);"></div><div class="b" style="left:2106.2px;top:2169.7px;width:271.6px;height:129.2px;background:rgb(242,230,254);"></div><div class="b" style="left:2380.2px;top:2169.7px;width:271.6px;height:129.2px;background:rgb(240,226,254);"></div><div class="b" style="left:2928.2px;top:2169.7px;width:271.6px;height:129.2px;background:rgb(243,231,254);"></div><div class="b" style="left:837.6px;top:1640.0px;width:2953.8px;height:2.4px;background:#e7e7ea;opacity:0.85"></div><div class="b" style="left:837.6px;top:1771.8px;width:2953.8px;height:2.4px;background:#e7e7ea;opacity:0.85"></div><div class="b" style="left:837.6px;top:1903.5px;width:2953.8px;height:2.4px;background:#e7e7ea;opacity:0.85"></div><div class="b" style="left:837.6px;top:2035.3px;width:2953.8px;height:2.4px;background:#e7e7ea;opacity:0.85"></div><div class="b" style="left:837.6px;top:2167.1px;width:2953.8px;height:2.4px;background:#e7e7ea;opacity:0.85"></div><div class="b" style="left:1245.3px;top:1398.4px;width:2.0px;height:795.6px;background:#e7e7ea;opacity:0.85"></div><div class="b" style="left:1830.0px;top:1398.4px;width:2.0px;height:795.6px;background:#e7e7ea;opacity:0.85"></div><div class="b" style="left:2104.0px;top:1398.4px;width:2.0px;height:795.6px;background:#e7e7ea;opacity:0.85"></div><div class="b" style="left:2378.0px;top:1398.4px;width:2.0px;height:795.6px;background:#e7e7ea;opacity:0.85"></div><div class="b" style="left:2652.0px;top:1398.4px;width:2.0px;height:795.6px;background:#e7e7ea;opacity:0.85"></div><div class="b" style="left:2926.0px;top:1398.4px;width:2.0px;height:795.6px;background:#e7e7ea;opacity:0.85"></div><div class="b" style="left:3200.0px;top:1398.4px;width:2.0px;height:795.6px;background:#e7e7ea;opacity:0.85"></div><div class="b" style="left:3474.0px;top:1398.4px;width:2.0px;height:795.6px;background:#e7e7ea;opacity:0.85"></div><div class="b" style="left:3748.0px;top:1398.4px;width:2.0px;height:795.6px;background:#e7e7ea;opacity:0.85"></div><div class="b" style="left:1821px;top:1398px;width:9px;height:800px;background:linear-gradient(90deg,rgba(0,0,0,0),rgba(0,0,0,0.035))"></div><div class="t" style="left:880.3px;top:1439.9px;font-size:28.30px;color:#020817;letter-spacing:-1.21px;-webkit-text-stroke:0.85px currentColor">SERIE</div><svg style="position:absolute;left:977.5px;top:1439.7px" width="30.0" height="30.0" viewBox="0 0 24 24" fill="none" stroke="#64748b" stroke-width="1.8" stroke-linecap="round" stroke-linejoin="round"><path d="m21 16-4 4-4-4"/><path d="M17 20V4"/><path d="m3 8 4-4 4 4"/><path d="M7 4v16"/></svg><div class="t" style="left:1291.1px;top:1439.9px;font-size:28.30px;color:#020817;letter-spacing:1.74px;-webkit-text-stroke:0.85px currentColor">PATH</div><svg style="position:absolute;left:1383.7px;top:1439.7px" width="30.0" height="30.0" viewBox="0 0 24 24" fill="none" stroke="#64748b" stroke-width="1.8" stroke-linecap="round" stroke-linejoin="round"><path d="m21 16-4 4-4-4"/><path d="M17 20V4"/><path d="m3 8 4-4 4 4"/><path d="M7 4v16"/></svg><div class="t" style="left:1875.4px;top:1439.9px;font-size:28.30px;color:#020817;letter-spacing:0.20px;-webkit-text-stroke:0.85px currentColor">UNIQUE</div><svg style="position:absolute;left:2003.7px;top:1439.7px" width="30.0" height="30.0" viewBox="0 0 24 24" fill="none" stroke="#64748b" stroke-width="1.8" stroke-linecap="round" stroke-linejoin="round"><path d="m21 16-4 4-4-4"/><path d="M17 20V4"/><path d="m3 8 4-4 4 4"/><path d="M7 4v16"/></svg><div class="t" style="left:2149.9px;top:1439.9px;font-size:28.30px;color:#020817;letter-spacing:1.33px;-webkit-text-stroke:0.85px currentColor">SUM</div><svg style="position:absolute;left:2231.4px;top:1439.7px" width="30.0" height="30.0" viewBox="0 0 24 24" fill="none" stroke="#64748b" stroke-width="1.8" stroke-linecap="round" stroke-linejoin="round"><path d="m21 16-4 4-4-4"/><path d="M17 20V4"/><path d="m3 8 4-4 4 4"/><path d="M7 4v16"/></svg><div class="t" style="left:2425.7px;top:1439.9px;font-size:28.30px;color:#020817;letter-spacing:-0.90px;-webkit-text-stroke:0.85px currentColor">AVERAGE</div><svg style="position:absolute;left:2572.2px;top:1439.7px" width="30.0" height="30.0" viewBox="0 0 24 24" fill="none" stroke="#64748b" stroke-width="1.8" stroke-linecap="round" stroke-linejoin="round"><path d="m21 16-4 4-4-4"/><path d="M17 20V4"/><path d="m3 8 4-4 4 4"/><path d="M7 4v16"/></svg><div class="t" style="left:2697.0px;top:1439.9px;font-size:28.30px;color:#020817;letter-spacing:2.87px;-webkit-text-stroke:0.85px currentColor">MIN</div><svg style="position:absolute;left:2770.6px;top:1439.7px" width="30.0" height="30.0" viewBox="0 0 24 24" fill="none" stroke="#64748b" stroke-width="1.8" stroke-linecap="round" stroke-linejoin="round"><path d="m21 16-4 4-4-4"/><path d="M17 20V4"/><path d="m3 8 4-4 4 4"/><path d="M7 4v16"/></svg><div class="t" style="left:2972.3px;top:1439.9px;font-size:28.30px;color:#020817;letter-spacing:1.95px;-webkit-text-stroke:0.85px currentColor">MAX</div><svg style="position:absolute;left:3055.1px;top:1439.7px" width="30.0" height="30.0" viewBox="0 0 24 24" fill="none" stroke="#64748b" stroke-width="1.8" stroke-linecap="round" stroke-linejoin="round"><path d="m21 16-4 4-4-4"/><path d="M17 20V4"/><path d="m3 8 4-4 4 4"/><path d="M7 4v16"/></svg><div class="t" style="left:3247.3px;top:1439.9px;font-size:28.30px;color:#020817;letter-spacing:0.52px;-webkit-text-stroke:0.85px currentColor">SAT, 01/11</div><svg style="position:absolute;left:3403.3px;top:1439.7px" width="30.0" height="30.0" viewBox="0 0 24 24" fill="none" stroke="#64748b" stroke-width="1.8" stroke-linecap="round" stroke-linejoin="round"><path d="m21 16-4 4-4-4"/><path d="M17 20V4"/><path d="m3 8 4-4 4 4"/><path d="M7 4v16"/></svg><div class="t" style="left:3521.4px;top:1439.9px;font-size:28.30px;color:#020817;letter-spacing:0.77px;-webkit-text-stroke:0.85px currentColor">SUN, 02/11</div><svg style="position:absolute;left:3689.5px;top:1439.7px" width="30.0" height="30.0" viewBox="0 0 24 24" fill="none" stroke="#64748b" stroke-width="1.8" stroke-linecap="round" stroke-linejoin="round"><path d="m21 16-4 4-4-4"/><path d="M17 20V4"/><path d="m3 8 4-4 4 4"/><path d="M7 4v16"/></svg><div class="b" style="left:880.4px;top:1555.3px;width:43.5px;height:43.5px;background:#2563eb;border-radius:8px;"></div><svg style="position:absolute;left:886.4px;top:1561.3px" width="31.5" height="31.5" viewBox="0 0 24 24" fill="none" stroke="#fff" stroke-width="2.6" stroke-linecap="round" stroke-linejoin="round"><path d="M20 6 9 17l-5-5"/></svg><div class="t" style="left:946.8px;top:1557.3px;font-size:39.60px;color:#020817;">screen_view</div><div class="t" style="left:1290.6px;top:1557.3px;font-size:39.60px;color:#020817;letter-spacing:0.06px;">modal:EventDetails</div><div class="t" style="left:2000.2px;top:1560.7px;font-size:36.50px;color:#020817;font-family:'Liberation Mono';letter-spacing:-1.50px;-webkit-text-stroke:0.1px currentColor">526</div><div class="t" style="left:2274.6px;top:1560.7px;font-size:36.50px;color:#020817;font-family:'Liberation Mono';letter-spacing:-1.50px;-webkit-text-stroke:0.1px currentColor">499</div><div class="t" style="left:2507.4px;top:1560.7px;font-size:36.50px;color:#020817;font-family:'Liberation Mono';letter-spacing:-1.50px;-webkit-text-stroke:0.1px currentColor">23.76</div><div class="t" style="left:2863.0px;top:1560.7px;font-size:36.50px;color:#020817;font-family:'Liberation Mono';letter-spacing:-1.50px;-webkit-text-stroke:0.1px currentColor">0</div><div class="t" style="left:3116.2px;top:1560.7px;font-size:36.50px;color:#020817;font-family:'Liberation Mono';letter-spacing:-1.50px;-webkit-text-stroke:0.1px currentColor">64</div><div class="t" style="left:3411.0px;top:1560.7px;font-size:36.50px;color:#020817;font-family:'Liberation Mono';letter-spacing:-1.50px;-webkit-text-stroke:0.1px currentColor">0</div><div class="t" style="left:3685.0px;top:1560.7px;font-size:36.50px;color:#020817;font-family:'Liberation Mono';letter-spacing:-1.50px;-webkit-text-stroke:0.1px currentColor">0</div><div class="b" style="left:880.4px;top:1687.0px;width:43.5px;height:43.5px;background:#ff7557;border-radius:8px;"></div><svg style="position:absolute;left:886.4px;top:1693.0px" width="31.5" height="31.5" viewBox="0 0 24 24" fill="none" stroke="#fff" stroke-width="2.6" stroke-linecap="round" stroke-linejoin="round"><path d="M20 6 9 17l-5-5"/></svg><div class="t" style="left:946.8px;top:1689.0px;font-size:39.60px;color:#020817;">screen_view</div><div class="t" style="left:1290.6px;top:1689.0px;font-size:39.60px;color:#020817;letter-spacing:0.12px;">modal:OverviewFilters</div><div class="t" style="left:2000.2px;top:1692.5px;font-size:36.50px;color:#020817;font-family:'Liberation Mono';letter-spacing:-1.50px;-webkit-text-stroke:0.1px currentColor">526</div><div class="t" style="left:2274.6px;top:1692.5px;font-size:36.50px;color:#020817;font-family:'Liberation Mono';letter-spacing:-1.50px;-webkit-text-stroke:0.1px currentColor">259</div><div class="t" style="left:2507.4px;top:1692.5px;font-size:36.50px;color:#020817;font-family:'Liberation Mono';letter-spacing:-1.50px;-webkit-text-stroke:0.1px currentColor">12.95</div><div class="t" style="left:2863.0px;top:1692.5px;font-size:36.50px;color:#020817;font-family:'Liberation Mono';letter-spacing:-1.50px;-webkit-text-stroke:0.1px currentColor">0</div><div class="t" style="left:3116.6px;top:1692.5px;font-size:36.50px;color:#020817;font-family:'Liberation Mono';letter-spacing:-1.50px;-webkit-text-stroke:0.1px currentColor">35</div><div class="t" style="left:3411.0px;top:1692.5px;font-size:36.50px;color:#020817;font-family:'Liberation Mono';letter-spacing:-1.50px;-webkit-text-stroke:0.1px currentColor">0</div><div class="t" style="left:3685.0px;top:1692.5px;font-size:36.50px;color:#020817;font-family:'Liberation Mono';letter-spacing:-1.50px;-webkit-text-stroke:0.1px currentColor">0</div><div class="b" style="left:880.4px;top:1818.8px;width:43.5px;height:43.5px;background:#7fe1d8;border-radius:8px;"></div><svg style="position:absolute;left:886.4px;top:1824.8px" width="31.5" height="31.5" viewBox="0 0 24 24" fill="none" stroke="#fff" stroke-width="2.6" stroke-linecap="round" stroke-linejoin="round"><path d="M20 6 9 17l-5-5"/></svg><div class="t" style="left:946.8px;top:1820.8px;font-size:39.60px;color:#020817;">screen_view</div><div class="t" style="left:1290.6px;top:1820.8px;font-size:39.60px;color:#020817;letter-spacing:-0.23px;">modal:SaveReport</div><div class="t" style="left:2000.2px;top:1824.2px;font-size:36.50px;color:#020817;font-family:'Liberation Mono';letter-spacing:-1.50px;-webkit-text-stroke:0.1px currentColor">526</div><div class="t" style="left:2274.6px;top:1824.2px;font-size:36.50px;color:#020817;font-family:'Liberation Mono';letter-spacing:-1.50px;-webkit-text-stroke:0.1px currentColor">109</div><div class="t" style="left:2527.4px;top:1824.2px;font-size:36.50px;color:#020817;font-family:'Liberation Mono';letter-spacing:-1.50px;-webkit-text-stroke:0.1px currentColor">5.74</div><div class="t" style="left:2863.0px;top:1824.2px;font-size:36.50px;color:#020817;font-family:'Liberation Mono';letter-spacing:-1.50px;-webkit-text-stroke:0.1px currentColor">0</div><div class="t" style="left:3117.0px;top:1824.2px;font-size:36.50px;color:#020817;font-family:'Liberation Mono';letter-spacing:-1.50px;-webkit-text-stroke:0.1px currentColor">32</div><div class="t" style="left:3411.0px;top:1824.2px;font-size:36.50px;color:#020817;font-family:'Liberation Mono';letter-spacing:-1.50px;-webkit-text-stroke:0.1px currentColor">0</div><div class="t" style="left:3685.0px;top:1824.2px;font-size:36.50px;color:#020817;font-family:'Liberation Mono';letter-spacing:-1.50px;-webkit-text-stroke:0.1px currentColor">0</div><div class="b" style="left:880.4px;top:1950.5px;width:43.5px;height:43.5px;background:#f8bc3c;border-radius:8px;"></div><svg style="position:absolute;left:886.4px;top:1956.5px" width="31.5" height="31.5" viewBox="0 0 24 24" fill="none" stroke="#fff" stroke-width="2.6" stroke-linecap="round" stroke-linejoin="round"><path d="M20 6 9 17l-5-5"/></svg><div class="t" style="left:946.8px;top:1952.5px;font-size:39.60px;color:#020817;">screen_view</div><div class="t" style="left:1290.6px;top:1952.5px;font-size:39.60px;color:#020817;letter-spacing:-0.15px;">modal:DateRangerPicker</div><div class="t" style="left:2000.2px;top:1956.0px;font-size:36.50px;color:#020817;font-family:'Liberation Mono';letter-spacing:-1.50px;-webkit-text-stroke:0.1px currentColor">526</div><div class="t" style="left:2294.6px;top:1956.0px;font-size:36.50px;color:#020817;font-family:'Liberation Mono';letter-spacing:-1.50px;-webkit-text-stroke:0.1px currentColor">93</div><div class="t" style="left:2528.5px;top:1956.0px;font-size:36.50px;color:#020817;font-family:'Liberation Mono';letter-spacing:-1.50px;-webkit-text-stroke:0.1px currentColor">5.17</div><div class="t" style="left:2863.0px;top:1956.0px;font-size:36.50px;color:#020817;font-family:'Liberation Mono';letter-spacing:-1.50px;-webkit-text-stroke:0.1px currentColor">0</div><div class="t" style="left:3116.6px;top:1956.0px;font-size:36.50px;color:#020817;font-family:'Liberation Mono';letter-spacing:-1.50px;-webkit-text-stroke:0.1px currentColor">26</div><div class="t" style="left:3411.0px;top:1956.0px;font-size:36.50px;color:#020817;font-family:'Liberation Mono';letter-spacing:-1.50px;-webkit-text-stroke:0.1px currentColor">0</div><div class="t" style="left:3685.0px;top:1956.0px;font-size:36.50px;color:#020817;font-family:'Liberation Mono';letter-spacing:-1.50px;-webkit-text-stroke:0.1px currentColor">0</div><div class="b" style="left:880.4px;top:2082.3px;width:43.5px;height:43.5px;background:#b3596e;border-radius:8px;"></div><svg style="position:absolute;left:886.4px;top:2088.3px" width="31.5" height="31.5" viewBox="0 0 24 24" fill="none" stroke="#fff" stroke-width="2.6" stroke-linecap="round" stroke-linejoin="round"><path d="M20 6 9 17l-5-5"/></svg><div class="t" style="left:946.8px;top:2084.3px;font-size:39.60px;color:#020817;">screen_view</div><div class="t" style="left:1290.6px;top:2084.3px;font-size:39.60px;color:#020817;">modal:AddReference</div><div class="t" style="left:2000.2px;top:2087.7px;font-size:36.50px;color:#020817;font-family:'Liberation Mono';letter-spacing:-1.50px;-webkit-text-stroke:0.1px currentColor">526</div><div class="t" style="left:2294.6px;top:2087.7px;font-size:36.50px;color:#020817;font-family:'Liberation Mono';letter-spacing:-1.50px;-webkit-text-stroke:0.1px currentColor">85</div><div class="t" style="left:2528.2px;top:2087.7px;font-size:36.50px;color:#020817;font-family:'Liberation Mono';letter-spacing:-1.50px;-webkit-text-stroke:0.1px currentColor">4.72</div><div class="t" style="left:2863.0px;top:2087.7px;font-size:36.50px;color:#020817;font-family:'Liberation Mono';letter-spacing:-1.50px;-webkit-text-stroke:0.1px currentColor">0</div><div class="t" style="left:3116.6px;top:2087.7px;font-size:36.50px;color:#020817;font-family:'Liberation Mono';letter-spacing:-1.50px;-webkit-text-stroke:0.1px currentColor">10</div><div class="t" style="left:3411.0px;top:2087.7px;font-size:36.50px;color:#020817;font-family:'Liberation Mono';letter-spacing:-1.50px;-webkit-text-stroke:0.1px currentColor">0</div><div class="t" style="left:3685.0px;top:2087.7px;font-size:36.50px;color:#020817;font-family:'Liberation Mono';letter-spacing:-1.50px;-webkit-text-stroke:0.1px currentColor">0</div>
</body></html>
